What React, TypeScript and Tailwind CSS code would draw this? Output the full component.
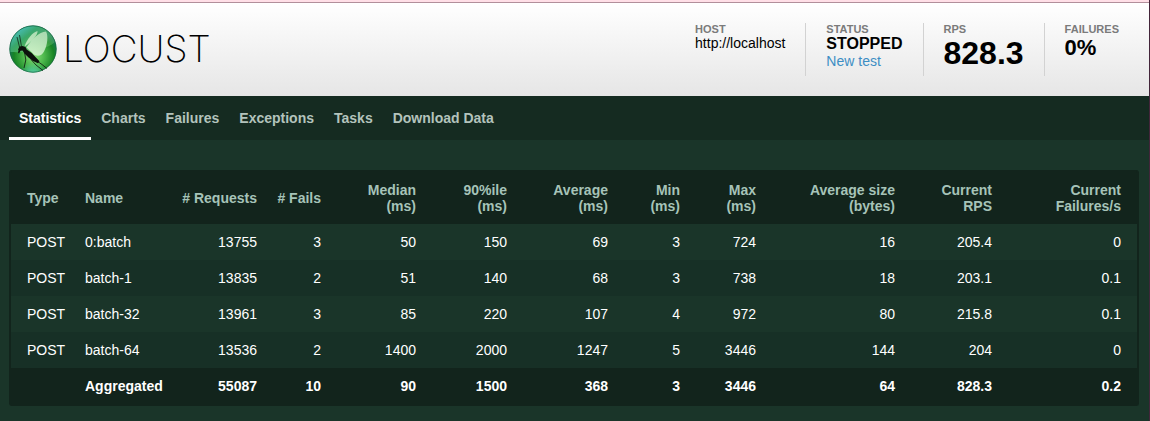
import type { ReactNode } from "react";

const tabs = ["Statistics", "Charts", "Failures", "Exceptions", "Tasks", "Download Data"];

const columns = [
  { lines: ["Type"], width: "w-[64px]" },
  { lines: ["Name"], width: "w-[92px]" },
  { lines: ["# Requests"], width: "w-[100px]" },
  { lines: ["# Fails"], width: "w-[64px]" },
  { lines: ["Median", "(ms)"], width: "w-[95px]" },
  { lines: ["90%ile", "(ms)"], width: "w-[91px]" },
  { lines: ["Average", "(ms)"], width: "w-[101px]" },
  { lines: ["Min", "(ms)"], width: "w-[72px]" },
  { lines: ["Max", "(ms)"], width: "w-[76px]" },
  { lines: ["Average size", "(bytes)"], width: "w-[139px]" },
  { lines: ["Current", "RPS"], width: "w-[97px]" },
  { lines: ["Current", "Failures/s"], width: "w-[135px]" },
];

const rows = [
  ["POST", "0:batch", "13755", "3", "50", "150", "69", "3", "724", "16", "205.4", "0"],
  ["POST", "batch-1", "13835", "2", "51", "140", "68", "3", "738", "18", "203.1", "0.1"],
  ["POST", "batch-32", "13961", "3", "85", "220", "107", "4", "972", "80", "215.8", "0.1"],
  ["POST", "batch-64", "13536", "2", "1400", "2000", "1247", "5", "3446", "144", "204", "0"],
];

const total = ["", "Aggregated", "55087", "10", "90", "1500", "368", "3", "3446", "64", "828.3", "0.2"];

const cellPadding = (i: number) =>
  i === 0 ? "pl-4 text-left" : i === 1 ? "pl-[10px] text-left" : i === 11 ? "pr-4 text-right" : "pr-[10px] text-right";

function LocustMark() {
  return (
    <svg viewBox="0 0 48 48" className="size-12 shrink-0" aria-hidden="true">
      <defs>
        <radialGradient id="ball" cx="25" cy="31" r="25" gradientUnits="userSpaceOnUse">
          <stop offset="0" stopColor="#8be37c" />
          <stop offset="0.4" stopColor="#4fb94d" />
          <stop offset="0.8" stopColor="#178324" />
          <stop offset="1" stopColor="#177a52" />
        </radialGradient>
        <linearGradient id="sky" x1="8" y1="3" x2="27" y2="27" gradientUnits="userSpaceOnUse">
          <stop offset="0" stopColor="#4cc3c6" />
          <stop offset="0.4" stopColor="#3fae74" stopOpacity="0.85" />
          <stop offset="1" stopColor="#8ad886" stopOpacity="0.3" />
        </linearGradient>
        <radialGradient id="floor" cx="24" cy="52" r="15" gradientUnits="userSpaceOnUse">
          <stop offset="0" stopColor="#62e0ce" />
          <stop offset="1" stopColor="#62e0ce" stopOpacity="0" />
        </radialGradient>
        <linearGradient id="wing" x1="36" y1="7" x2="25" y2="30" gradientUnits="userSpaceOnUse">
          <stop offset="0" stopColor="#b5e0b8" stopOpacity="0.9" />
          <stop offset="1" stopColor="#d8f5d2" stopOpacity="0.85" />
        </linearGradient>
      </defs>
      <circle cx="24" cy="24" r="23.5" fill="url(#ball)" />
      <circle cx="24" cy="24" r="23.5" fill="url(#floor)" />
      <path d="M1 27C0 12 10 1 24 1c11 0 19 6 22 16C38 24 22 28 1 27Z" fill="url(#sky)" />
      <circle cx="24" cy="24" r="23.2" fill="none" stroke="#176445" strokeWidth="0.7" />
      <path d="M15.500 21.500C18 14 24 7 28.500 6c.5 4-6 11-13 15.500Z" fill="url(#wing)" />
      <path d="M17.500 22.500C23 14 30 7 37 6.500c2.500 4 1.500 14-2 20-2.500 5-8 6-12 1Z" fill="url(#wing)" />
      <path
        d="M9 24.500l1.500-3 3-.5 3 1 1.200 2.500 5 3.500 7.800 8.200-1.500 2-5-2.200-4.500-3.500-4-4-2-3-2 .2-1.500 2.800-1-1 .5-2.300Z"
        fill="#0c120c"
      />
      <path d="M10.500 22L8 12M12.500 21.500L10.500 10" stroke="#0c120c" strokeWidth="0.7" fill="none" />
      <path
        d="M15.500 27l1.300 8-1.800 8M22 34.500l5 5.500 7 5.500M28 36l5 3.500 5 4"
        stroke="#0c120c"
        strokeWidth="0.8"
        fill="none"
        strokeLinejoin="round"
      />
    </svg>
  );
}

function Stat({ label, divider = true, children }: { label: string; divider?: boolean; children: ReactNode }) {
  return (
    <div className={divider ? "min-h-[53px] border-r border-[#d2d2d2] pr-5" : "min-h-[53px]"}>
      <div className="text-[11px] leading-3 font-bold text-[#7b7b7b]">{label}</div>
      {children}
    </div>
  );
}

export default function App() {
  return (
    <div className="min-h-screen border-r border-[#43253a] bg-[#1a3529] font-['Liberation_Sans',Arial,sans-serif] text-sm text-white">
      <header className="border-t-2 border-[#ffdfe7]">
        <div className="flex flex-wrap items-start justify-between border-t border-[#b28f9b] bg-linear-to-b from-white to-[#e6e6e6] pb-5 text-black">
          <a href="#" className="mt-[22px] ml-[9px] flex items-center gap-[6px] text-black">
            <LocustMark />
            <span className="font-['Inter',sans-serif] text-[37px] leading-10 font-extralight">LOCUST</span>
          </a>
          <div className="mt-5 mr-[30px] flex gap-5">
            <Stat label="HOST">
              <div className="leading-4">http://localhost</div>
            </Stat>
            <Stat label="STATUS">
              <div className="text-base leading-[18px] font-bold">STOPPED</div>
              <a href="#" className="block leading-4 text-[#3d8ec4]">New test</a>
            </Stat>
            <Stat label="RPS">
              <div className="text-[32px] leading-9 font-bold">828.3</div>
            </Stat>
            <Stat label="FAILURES" divider={false}>
              <div className="text-[22px] leading-[26px] font-bold">0%</div>
            </Stat>
          </div>
        </div>
      </header>

      <nav className="flex flex-wrap bg-[#152b21] px-[9px]">
        {tabs.map((tab, i) => (
          <a
            key={tab}
            href="#"
            className={
              i === 0
                ? "h-11 border-b-3 border-white px-[10px] pt-[14px] leading-4 font-bold text-white"
                : "h-11 px-[10px] pt-[14px] leading-4 font-bold text-[#b3c3bc]"
            }
          >
            {tab}
          </a>
        ))}
      </nav>

      <main className="pt-[30px] pr-[10px] pb-[15px] pl-[9px]">
        <div className="overflow-x-auto rounded-[3px] border-x-2 border-b-2 border-[#12241c] bg-[#12241c]">
          <table className="w-full table-fixed border-collapse">
            <colgroup>
              {columns.map((column, i) => (
                <col key={i} className={column.width} />
              ))}
            </colgroup>
            <thead>
              <tr className="h-[54px] text-[#a6c3b8]">
                {columns.map((column, i) => (
                  <th key={i} scope="col" className={`pt-0.5 leading-4 font-bold whitespace-nowrap ${cellPadding(i)}`}>
                    {column.lines.map((line) => (
                      <span key={line} className="block">{line}</span>
                    ))}
                  </th>
                ))}
              </tr>
            </thead>
            <tbody>
              {rows.map((row) => (
                <tr key={row[1]} className="h-9 odd:bg-[#1a3529] even:bg-[#173026]">
                  {row.map((value, i) => (
                    <td key={i} className={cellPadding(i)}>{value}</td>
                  ))}
                </tr>
              ))}
            </tbody>
            <tfoot>
              <tr className="h-9 font-bold">
                {total.map((value, i) => (
                  <td key={i} className={cellPadding(i)}>{value}</td>
                ))}
              </tr>
            </tfoot>
          </table>
        </div>
      </main>
    </div>
  );
}
